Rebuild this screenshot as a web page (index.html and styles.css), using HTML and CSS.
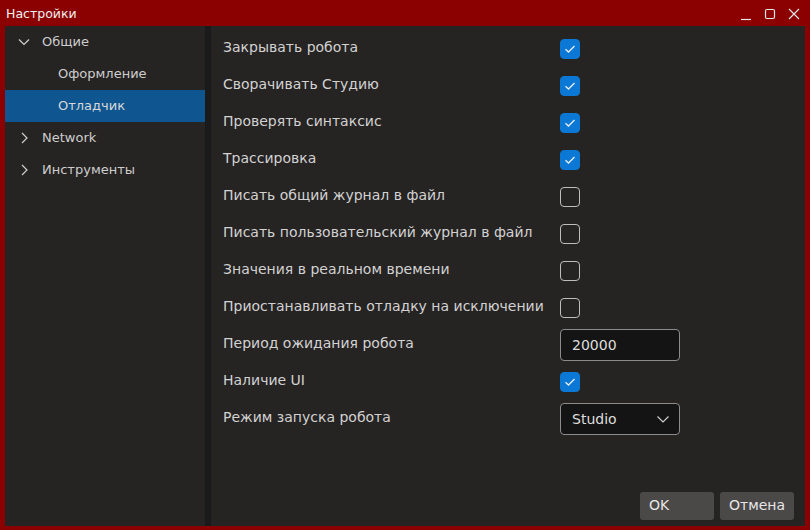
FILE: index.html
```html
<!DOCTYPE html>
<html lang="ru">
<head>
<meta charset="utf-8">
<title>Настройки</title>
<link rel="stylesheet" href="styles.css">
</head>
<body>
<div class="window">
  <div class="titlebar">
    <span class="title">Настройки</span>
    <div class="wctrls">
      <svg class="wbtn" width="14" height="14" viewBox="0 0 14 14"><path d="M2 12.5H12" stroke="#e6e6e6" stroke-width="1.2" fill="none"/></svg>
      <svg class="wbtn" width="14" height="14" viewBox="0 0 14 14"><rect x="2.5" y="2.5" width="9" height="9" rx="1.5" stroke="#e6e6e6" stroke-width="1.2" fill="none"/></svg>
      <svg class="wbtn" width="14" height="14" viewBox="0 0 14 14"><path d="M2 2L12 12M12 2L2 12" stroke="#e6e6e6" stroke-width="1.2" fill="none"/></svg>
    </div>
  </div>
  <div class="main">
    <nav class="sidebar">
      <div class="item">
        <svg class="chev" width="14" height="14" viewBox="0 0 14 14"><path d="M2 4.5L7 9.5L12 4.5" stroke="#d0d0d0" stroke-width="1.2" fill="none"/></svg>
        <span>Общие</span>
      </div>
      <div class="item child"><span>Оформление</span></div>
      <div class="item child selected"><span>Отладчик</span></div>
      <div class="item">
        <svg class="chev" width="14" height="14" viewBox="0 0 14 14"><path d="M5 2L10 7L5 12" stroke="#d0d0d0" stroke-width="1.2" fill="none"/></svg>
        <span>Network</span>
      </div>
      <div class="item">
        <svg class="chev" width="14" height="14" viewBox="0 0 14 14"><path d="M5 2L10 7L5 12" stroke="#d0d0d0" stroke-width="1.2" fill="none"/></svg>
        <span>Инструменты</span>
      </div>
    </nav>
    <div class="splitter"></div>
    <section class="content">
      <div class="form">
        <span class="label">Закрывать робота</span>
        <span class="cb checked"><svg width="12" height="10" viewBox="0 0 12 10"><path d="M1.5 5.2L4.5 8L10.5 2" stroke="#e8eef5" stroke-width="1.3" fill="none"/></svg></span>

        <span class="label">Сворачивать Студию</span>
        <span class="cb checked"><svg width="12" height="10" viewBox="0 0 12 10"><path d="M1.5 5.2L4.5 8L10.5 2" stroke="#e8eef5" stroke-width="1.3" fill="none"/></svg></span>

        <span class="label">Проверять синтаксис</span>
        <span class="cb checked"><svg width="12" height="10" viewBox="0 0 12 10"><path d="M1.5 5.2L4.5 8L10.5 2" stroke="#e8eef5" stroke-width="1.3" fill="none"/></svg></span>

        <span class="label">Трассировка</span>
        <span class="cb checked"><svg width="12" height="10" viewBox="0 0 12 10"><path d="M1.5 5.2L4.5 8L10.5 2" stroke="#e8eef5" stroke-width="1.3" fill="none"/></svg></span>

        <span class="label">Писать общий журнал в файл</span>
        <span class="cb"></span>

        <span class="label">Писать пользовательский журнал в файл</span>
        <span class="cb"></span>

        <span class="label">Значения в реальном времени</span>
        <span class="cb"></span>

        <span class="label">Приостанавливать отладку на исключении</span>
        <span class="cb"></span>

        <span class="label">Период ожидания робота</span>
        <span class="field">20000</span>

        <span class="label">Наличие UI</span>
        <span class="cb checked"><svg width="12" height="10" viewBox="0 0 12 10"><path d="M1.5 5.2L4.5 8L10.5 2" stroke="#e8eef5" stroke-width="1.3" fill="none"/></svg></span>

        <span class="label">Режим запуска робота</span>
        <span class="field combo"><span>Studio</span><svg width="14" height="10" viewBox="0 0 14 10"><path d="M1.5 2.5L7 8L12.5 2.5" stroke="#cfcfcf" stroke-width="1.2" fill="none"/></svg></span>
      </div>
      <div class="footer">
        <button class="btn">OK</button>
        <button class="btn">Отмена</button>
      </div>
    </section>
  </div>
</div>
</body>
</html>
```

FILE: styles.css
```css
html, body {
  margin: 0;
  padding: 0;
  width: 810px;
  height: 530px;
  overflow: hidden;
  background: #8b0000;
  font-family: "DejaVu Sans", "Noto Sans", sans-serif;
}
.window {
  display: flex;
  flex-direction: column;
  width: 810px;
  height: 530px;
}
.titlebar {
  height: 26px;
  display: flex;
  align-items: center;
  justify-content: space-between;
  padding: 0 9px 0 6px;
  box-sizing: border-box;
}
.title {
  color: #f0f0f0;
  font-size: 12.5px;
  margin-top: 1px;
}
.wctrls {
  display: flex;
  gap: 10px;
  align-items: center;
  margin-top: 1px;
}
.wbtn {
  display: block;
}
.main {
  display: flex;
  height: 500px;
  margin: 0 5px;
  background: #262323;
}
.sidebar {
  width: 200px;
  flex: none;
  background: #262323;
  display: flex;
  flex-direction: column;
}
.item {
  height: 32px;
  display: flex;
  align-items: center;
  color: #cdcdcd;
  font-size: 13px;
  padding-left: 12px;
  box-sizing: border-box;
}
.item span {
  margin-top: -2px;
}
.item .chev {
  margin-right: 11px;
  flex: none;
  margin-top: -1px;
}
.item.child {
  padding-left: 53px;
}
.item.selected {
  background: #0f5590;
  color: #d8d8d8;
}
.splitter {
  width: 6px;
  flex: none;
  background: #1b1a1a;
}
.content {
  flex: 1;
  display: flex;
  flex-direction: column;
  padding: 7px 11px 6px 12px;
  box-sizing: border-box;
}
.form {
  display: grid;
  grid-template-columns: 337px 120px;
  grid-auto-rows: 32px;
  row-gap: 5px;
  align-items: center;
}
.label {
  color: #d2d2d2;
  font-size: 14px;
  margin-top: -5px;
}
.cb {
  width: 20px;
  height: 20px;
  box-sizing: border-box;
  border: 1px solid #bdbdbd;
  border-radius: 4px;
  display: flex;
  align-items: center;
  justify-content: center;
}
.cb.checked {
  background: #0b78d5;
  border-color: #0b78d5;
}
.field {
  height: 32px;
  box-sizing: border-box;
  border: 1px solid #8c8c8c;
  border-radius: 4px;
  background: #151414;
  color: #dedede;
  font-size: 14px;
  display: flex;
  align-items: center;
  padding: 0 11px;
}
.field > span {
  margin-top: -1px;
}
.combo {
  justify-content: space-between;
  padding-right: 9px;
}
.footer {
  margin-top: auto;
  display: flex;
  justify-content: flex-end;
  gap: 6px;
}
.btn {
  width: 74px;
  height: 28px;
  border: none;
  border-radius: 3px;
  background: #4b4848;
  color: #e6e6e6;
  font-family: "DejaVu Sans", "Noto Sans", sans-serif;
  font-size: 14px;
  text-align: left;
  padding: 0 0 2px 9px;
}
```
